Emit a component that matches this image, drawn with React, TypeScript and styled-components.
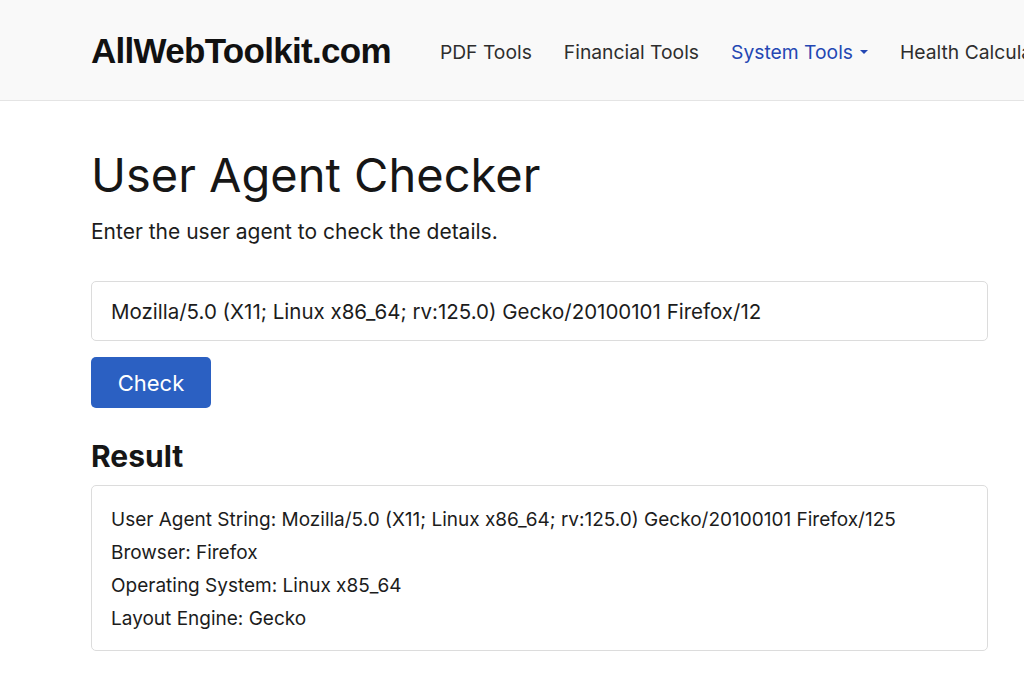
import React, { useState } from "react";
import styled, { createGlobalStyle } from "styled-components";

const GlobalStyle = createGlobalStyle`
  html, body {
    margin: 0;
    padding: 0;
    background: #ffffff;
    font-family: Inter, "Noto Sans", sans-serif;
    color: #1c1c1c;
  }
  * {
    box-sizing: border-box;
  }
`;

const navLinks = [
  { label: "PDF Tools" },
  { label: "Financial Tools" },
  { label: "System Tools", active: true, dropdown: true },
  { label: "Health Calculators" },
];

const parseAgent = (ua: string) => {
  const browser = /Firefox/.test(ua) ? "Firefox" : /Chrome/.test(ua) ? "Chrome" : "Unknown";
  const engine = /Gecko\//.test(ua) ? "Gecko" : "Unknown";
  return { browser, os: "Linux x85_64", engine };
};

const App = () => {
  const [agent, setAgent] = useState(
    "Mozilla/5.0 (X11; Linux x86_64; rv:125.0) Gecko/20100101 Firefox/12"
  );
  const full = "Mozilla/5.0 (X11; Linux x86_64; rv:125.0) Gecko/20100101 Firefox/125";
  const info = parseAgent(full);

  return (
    <>
      <GlobalStyle />
      <Navbar>
        <Brand>AllWebToolkit.com</Brand>
        <NavList>
          {navLinks.map((l) => (
            <NavItem key={l.label} $active={l.active}>
              {l.label}
              {l.dropdown && <Caret />}
            </NavItem>
          ))}
        </NavList>
      </Navbar>
      <Main>
        <Title>User Agent Checker</Title>
        <Lead>Enter the user agent to check the details.</Lead>
        <Input value={agent} onChange={(e) => setAgent(e.target.value)} />
        <Button>Check</Button>
        <SubTitle>Result</SubTitle>
        <ResultBox>
          <Line>User Agent String: {full}</Line>
          <Line>Browser: {info.browser}</Line>
          <Line>Operating System: {info.os}</Line>
          <Line>Layout Engine: {info.engine}</Line>
        </ResultBox>
      </Main>
    </>
  );
};

export default App;

const Navbar = styled.nav`
  height: 101px;
  background-color: #f9f9f9;
  border-bottom: 1px solid #e4e4e4;
  display: flex;
  align-items: center;
  padding-left: 91px;
  padding-top: 4px;
  overflow: hidden;
  white-space: nowrap;
`;

const Brand = styled.div`
  font-family: "Liberation Sans", Arial, sans-serif;
  font-weight: 700;
  font-size: 35px;
  letter-spacing: -0.7px;
  color: #111;
  margin-right: 49px;
  padding-bottom: 2px;
`;

const NavList = styled.div`
  display: flex;
  align-items: center;
  gap: 32px;
`;

const NavItem = styled.a<{ $active?: boolean }>`
  font-size: 19.3px;
  color: ${(p) => (p.$active ? "#2447b3" : "#2e2e2e")};
  display: flex;
  align-items: center;
  cursor: pointer;
`;

const Caret = styled.span`
  display: inline-block;
  margin-left: 7px;
  width: 0;
  height: 0;
  border-left: 4px solid transparent;
  border-right: 4px solid transparent;
  border-top: 4px solid #2447b3;
`;

const Main = styled.main`
  padding-left: 91px;
  width: 988px;
  padding-top: 44px;
`;

const Title = styled.h1`
  margin: 0;
  font-size: 47px;
  font-weight: 400;
  line-height: 60px;
  color: #161616;
`;

const Lead = styled.p`
  margin: 13px 0 0;
  font-size: 21px;
  line-height: 28px;
  color: #1c1c1c;
`;

const Input = styled.input`
  display: block;
  margin-top: 35px;
  width: 100%;
  height: 60px;
  border: 1px solid #dcdcdc;
  border-radius: 5px;
  padding: 0 19px;
  font-family: Inter, "Noto Sans", sans-serif;
  font-size: 20.5px;
  color: #1c1c1c;
  outline: none;
`;

const Button = styled.button`
  display: block;
  margin-top: 16px;
  width: 120px;
  height: 51px;
  background-color: #2b60c2;
  border: none;
  border-radius: 5px;
  color: #ffffff;
  font-family: Inter, "Noto Sans", sans-serif;
  font-size: 22px;
  cursor: pointer;
`;

const SubTitle = styled.h2`
  margin: 28px 0 0;
  font-size: 30px;
  font-weight: 700;
  line-height: 40px;
  color: #161616;
`;

const ResultBox = styled.div`
  margin-top: 9px;
  border: 1px solid #dcdcdc;
  border-radius: 5px;
  padding: 17px 19px 15px;
`;

const Line = styled.div`
  font-size: 19px;
  line-height: 33px;
  color: #1c1c1c;
`;
